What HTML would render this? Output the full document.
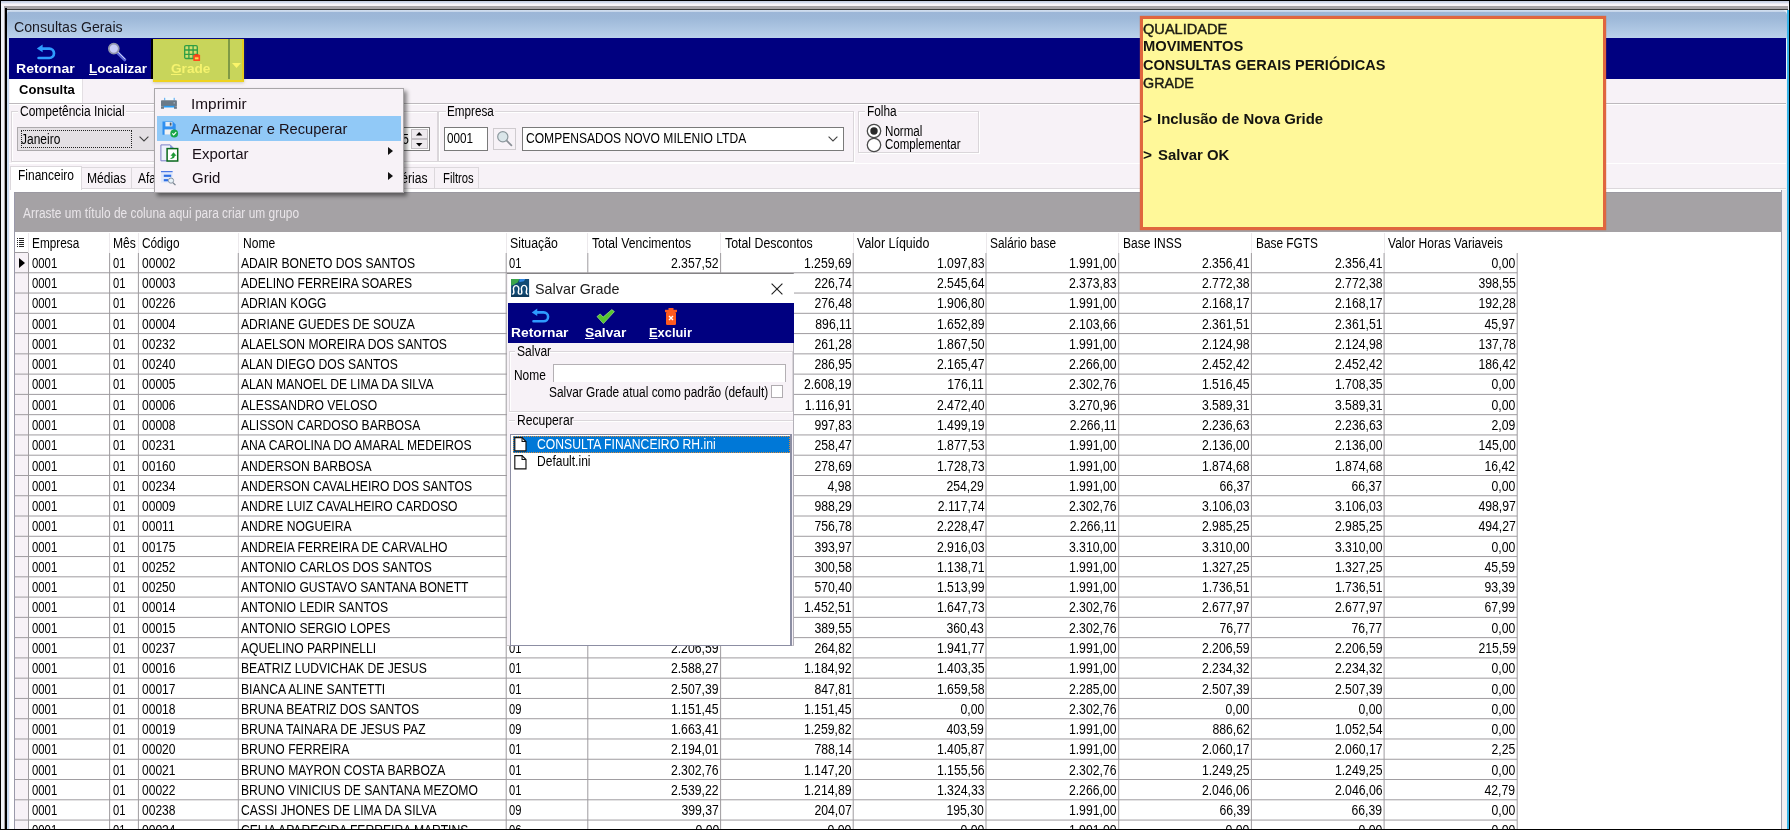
<!DOCTYPE html><html lang="pt-BR"><head><meta charset="utf-8"><title>Consultas Gerais</title><style>
    *{box-sizing:border-box}
    html,body{margin:0;padding:0}
    body{width:1790px;height:830px;overflow:hidden;background:#000;position:relative;font-family:"Liberation Sans",sans-serif;font-size:14px;color:#000}
    div,span,section{position:absolute;white-space:nowrap}
    section{left:0;top:0;width:1790px;height:830px}
    svg{position:absolute;overflow:visible}
    .t{line-height:16px;height:16px;transform-origin:0 50%;transform:scaleX(.85);white-space:pre}
    .r{transform-origin:100% 50%;text-align:right}
    .n{transform:scaleX(.873)}
.c{transform:scaleX(.86)}
.d{transform:scaleX(.8)}
.e{transform:scaleX(.81)}
.m{transform:scaleX(.866)}
    .w{color:#fff}
    .bd{font-weight:bold}
    u{text-decoration:underline}
    </style></head><body><div id="app" style="left:0;top:0;width:1790px;height:830px;will-change:transform">
<section id="window-frame">
<div style="left:1px;top:1px;width:1788px;height:828px;background:#eef1f8"></div>
<div style="left:1px;top:1px;width:1788px;height:5px;background:linear-gradient(#c2cbe0,#d6ddec 35%,#f6f3f8 60%,#f7f3f7)"></div>
<div style="left:4px;top:6px;width:1784px;height:3px;background:#a6a3a6"></div>
<div style="left:4px;top:9px;width:1784px;height:1px;background:#3c3c3c"></div>
<div style="left:3.5px;top:6px;width:1.5px;height:823px;background:#a6a3a6"></div>
<div style="left:5px;top:8px;width:2px;height:821px;background:#000"></div>
<div style="left:7px;top:10px;width:3px;height:819px;background:#c8dbf1"></div>
<div style="left:1786.5px;top:10px;width:1px;height:819px;background:#e6eef8"></div>
<div style="left:1787.3px;top:10px;width:1.7px;height:819px;background:#38b4e8"></div>
<div style="left:7px;top:10px;width:1780px;height:29px;background:linear-gradient(#d3e0f0 0,#c6d6ea 1.500px,#9cb6d7 2px,#9db8d8 8px,#b9d0ea 27px,#c4d9f1 100%);border-radius:5px 5px 0 0"></div>
<span class="t" style="top:18.64px;font-size:14.1px;left:14.10px;transform:scaleX(1.0055);color:#1a1a22;">Consultas Gerais</span>
<div style="left:9.3px;top:38.2px;width:1777.2px;height:40.7px;background:#000080"></div>
<div style="left:9.3px;top:78.9px;width:1777.2px;height:750.1px;background:#f7f2f7"></div>
</section>
<section id="main-toolbar">
<div style="left:153.2px;top:38.8px;width:90.6px;height:42.8px;background:#c8d55b;border:1px solid #d9cf35;border-left:0;border-right:2px solid #e3cc22;border-bottom:2px solid #efd21e;box-shadow:0 1px 3px rgba(120,120,60,.35)"></div>
<div style="left:151.2px;top:38.8px;width:2px;height:40.1px;background:#000"></div>
<div style="left:228.3px;top:39px;width:1.4px;height:40px;background:#7f9a45"></div>
<svg style="left:232px;top:63px" width="9" height="5" viewBox="0 0 9 5"><path d="M0 0h9L4.5 5z" fill="#fbf56a"/></svg>
<span class="t" style="top:61.20px;font-size:13px;left:16.00px;transform:scaleX(1.0833);color:#fff;font-weight:bold;">Retornar</span>
<span class="t" style="top:61.20px;font-size:13px;left:88.80px;transform:scaleX(1.0273);color:#fff;font-weight:bold;"><u>L</u>ocalizar</span>
<span class="t" style="top:61.20px;font-size:13px;left:171.00px;transform:scaleX(1.0485);color:#f5f36e;font-weight:bold;"><u>G</u>rade</span>
<svg style="left:35.500px;top:43.500px" width="20" height="17" viewBox="0 0 20 17"><path d="M5 4.600h8.300a4.700 4.700 0 0 1 0 9.400H2.600" fill="none" stroke="#2e9bff" stroke-width="2.700" stroke-linecap="round"/><path d="M6.600.400.800 4.600l5.800 3.700z" fill="#2e9bff"/></svg>
<svg style="left:106.300px;top:40.800px" width="22" height="22" viewBox="0 0 22 22"><path d="M10.500 10.500 18.700 18.700" stroke="#5a64d6" stroke-width="3.200" stroke-linecap="round"/><path d="M11.500 10.600 18.900 18" stroke="#d5d8f6" stroke-width="1" stroke-linecap="round"/><circle cx="7.800" cy="7.600" r="5" fill="#c8ccf8" stroke="#9095aa" stroke-width="1.700"/></svg>
<svg style="left:183.800px;top:45.200px" width="18" height="18" viewBox="0 0 18 18"><rect x=".7" y=".7" width="12.600" height="12.800" rx="1.200" fill="#d3de6c" stroke="#2f9e44" stroke-width="1.300"/><path d="M4.900.7v12.800M9.100.7v12.800M.7 5h12.600M.7 9.300h12.600" stroke="#2f9e44" stroke-width="1.300"/><rect x="9.300" y="9.800" width="6.800" height="6.200" rx=".6" fill="#ff4a1c"/><rect x="10.900" y="12.300" width="3.600" height="2" fill="#ffd84a"/><rect x="11" y="9" width="3.400" height="1.500" fill="#e0401a"/></svg>
</section>
<section id="page-tabs">
<div style="left:9.8px;top:78.9px;width:73.2px;height:23.8px;background:#fff;border-right:1px solid #e3dfe3"></div>
<span class="t" style="top:82.07px;font-size:13.4px;left:18.60px;transform:scaleX(0.9739);font-weight:bold;">Consulta</span>
<div style="left:9.3px;top:102.6px;width:1776.5px;height:1px;background:#bdb9bd"></div>
<div style="left:9.3px;top:103.6px;width:1776.5px;height:1px;background:#fff"></div>
</section>
<section id="filter-panel">
<div style="left:11px;top:110.5px;width:427px;height:51px;border:1px solid #dad6da;box-shadow:inset 1px 1px 0 #fff,1px 1px 0 #fff"></div>
<div style="left:18px;top:104.5px;width:107.7px;height:13px;background:#f7f2f7"></div>
<span class="t" style="top:102.77px;left:19.50px;transform:scaleX(0.857);">Competência Inicial</span>
<div style="left:438px;top:111px;width:415.5px;height:50.5px;border:1px solid #dad6da;box-shadow:inset 1px 1px 0 #fff,1px 1px 0 #fff"></div>
<div style="left:445.6px;top:105px;width:49.8px;height:13px;background:#f7f2f7"></div>
<span class="t" style="top:103.27px;left:447.10px;transform:scaleX(0.8352);">Empresa</span>
<div style="left:858px;top:111px;width:121px;height:41.5px;border:1px solid #dad6da;box-shadow:inset 1px 1px 0 #fff,1px 1px 0 #fff"></div>
<div style="left:865.4px;top:105px;width:32.7px;height:13px;background:#f7f2f7"></div>
<span class="t" style="top:103.27px;left:866.90px;transform:scaleX(0.8478);">Folha</span>
<div style="left:17.4px;top:127.3px;width:140px;height:23.5px;background:#e4e0e4;border:1px solid #adaaad"></div>
<div style="left:20.5px;top:130.3px;width:111.2px;height:17.7px;border:1px dotted #222"></div>
<span class="t" style="top:131.37px;left:21.20px;transform:scaleX(0.8558);">Janeiro</span>
<svg style="left:138.6px;top:136px" width="10" height="6" viewBox="0 0 10 6"><path d="M.6.6 5 5 9.4.6" fill="none" stroke="#444" stroke-width="1.1"/></svg>
<div style="left:330px;top:127.3px;width:99.8px;height:23.3px;background:#fff;border:1px solid #7a7a7a"></div>
<span class="t" style="top:130.57px;right:1381.00px;transform-origin:100% 50%;">5</span>
<div style="left:411px;top:128.6px;width:17.2px;height:10.3px;background:#eeeaee;border:1px solid #c4c0c4"></div>
<div style="left:411px;top:139.2px;width:17.2px;height:10.3px;background:#eeeaee;border:1px solid #c4c0c4"></div>
<svg style="left:416.4px;top:132px" width="6.4" height="3.6" viewBox="0 0 8 4.5"><path d="M0 4.5h8L4 0z" fill="#000"/></svg>
<svg style="left:416.4px;top:142.8px" width="6.4" height="3.6" viewBox="0 0 8 4.5"><path d="M0 0h8L4 4.5z" fill="#000"/></svg>
<div style="left:443.6px;top:127.3px;width:44.8px;height:23.3px;background:#fff;border:1px solid #7a7a7a"></div>
<span class="t" style="top:130.17px;left:447.20px;transform:scaleX(0.8377);">0001</span>
<div style="left:493px;top:127.5px;width:22.6px;height:22.6px;background:#f7f2f7;border:1px solid #cfcbcf"></div>
<svg style="left:496px;top:130px" width="17" height="17" viewBox="0 0 17 17"><path d="M10.2 10.2 15.4 15.4" stroke="#8a8f96" stroke-width="1.7" stroke-linecap="round"/><circle cx="6.8" cy="6.8" r="5.1" fill="#dbe6ea" stroke="#8b979c" stroke-width="1.2"/></svg>
<div style="left:522.2px;top:127.3px;width:321.4px;height:23.3px;background:#fff;border:1px solid #7a7a7a"></div>
<span class="t" style="top:130.17px;left:525.80px;transform:scaleX(0.8613);">COMPENSADOS NOVO MILENIO LTDA</span>
<svg style="left:828px;top:136.3px" width="10" height="6" viewBox="0 0 10 6"><path d="M.6.6 5 5 9.4.6" fill="none" stroke="#444" stroke-width="1.1"/></svg>
<svg style="left:865.7px;top:123.1px" width="16" height="16" viewBox="0 0 16 16"><circle cx="8" cy="8" r="6.700" fill="#fff" stroke="#4a4a4a" stroke-width="1.300"/><circle cx="8" cy="8" r="3.700" fill="#2a2a2a"/></svg>
<svg style="left:865.7px;top:137.2px" width="16" height="16" viewBox="0 0 16 16"><circle cx="8" cy="8" r="6.700" fill="#fff" stroke="#4a4a4a" stroke-width="1.300"/></svg>
<span class="t" style="top:122.57px;left:885.20px;transform:scaleX(0.8288);">Normal</span>
<span class="t" style="top:136.37px;left:885.20px;transform:scaleX(0.8222);">Complementar</span>
<div style="left:9.3px;top:163.2px;width:1776.5px;height:1px;background:#fff"></div>
</section>
<section id="view-tabs">
<div style="left:9.8px;top:188.5px;width:1776px;height:641px;background:#fff"></div>
<div style="left:1781px;top:190px;width:1px;height:639px;background:#a09fae"></div>
<div style="left:1782px;top:190px;width:4.6px;height:639px;background:#f1eef2"></div>
<div style="left:9.8px;top:188px;width:1776px;height:1px;background:#dcd8dc"></div>
<div style="left:82px;top:167px;width:49.7px;height:21.2px;background:#f7f2f7;border:1px solid #dcd8dc;border-bottom:0;border-left:0"></div>
<span class="t" style="top:169.67px;left:87.10px;transform:scaleX(0.864);">Médias</span>
<div style="left:131.7px;top:167px;width:90px;height:21.2px;background:#f7f2f7;border:1px solid #dcd8dc;border-bottom:0;border-left:0"></div>
<span class="t" style="top:169.67px;left:137.70px;">Afastamentos</span>
<div style="left:386px;top:167px;width:48.5px;height:21.2px;background:#f7f2f7;border:1px solid #dcd8dc;border-bottom:0;border-left:0"></div>
<span class="t" style="top:169.67px;left:393.80px;transform:scaleX(0.861);">Férias</span>
<div style="left:434.5px;top:167px;width:44.8px;height:21.2px;background:#f7f2f7;border:1px solid #dcd8dc;border-bottom:0;border-left:0"></div>
<span class="t" style="top:169.67px;left:442.90px;transform:scaleX(0.8052);">Filtros</span>
<div style="left:9.8px;top:165.7px;width:72.3px;height:24px;background:#fff;border:1px solid #dcd8dc;border-bottom:0"></div>
<span class="t" style="top:167.37px;left:18.40px;transform:scaleX(0.8566);">Financeiro</span>
</section>
<section id="group-band">
<div style="left:14.3px;top:191.7px;width:1767px;height:40.5px;background:#a5a2a5;border-left:1px solid #9a99aa;border-top:1px solid #9b99a1"></div>
<span class="t" style="top:204.77px;left:23.30px;transform:scaleX(0.8529);color:#e9e5e9;">Arraste um título de coluna aqui para criar um grupo</span>
</section>
<section id="grid-area">
<div style="left:14.3px;top:232px;width:14.2px;height:597px;border-left:1px solid #9a99aa"></div>
<div style="left:15.3px;top:252.5px;width:13.2px;height:576.5px;background:#f7f2f7"></div>
<div style="left:28px;top:232.5px;width:1px;height:20.5px;background:#ece9ec"></div>
<div style="left:109.1px;top:232.5px;width:1px;height:20.5px;background:#ece9ec"></div>
<div style="left:137.9px;top:232.5px;width:1px;height:20.5px;background:#ece9ec"></div>
<div style="left:237.8px;top:232.5px;width:1px;height:20.5px;background:#ece9ec"></div>
<div style="left:505.7px;top:232.5px;width:1px;height:20.5px;background:#ece9ec"></div>
<div style="left:587.3px;top:232.5px;width:1px;height:20.5px;background:#ece9ec"></div>
<div style="left:720.1px;top:232.5px;width:1px;height:20.5px;background:#ece9ec"></div>
<div style="left:852.7px;top:232.5px;width:1px;height:20.5px;background:#ece9ec"></div>
<div style="left:985.5px;top:232.5px;width:1px;height:20.5px;background:#ece9ec"></div>
<div style="left:1118.2px;top:232.5px;width:1px;height:20.5px;background:#ece9ec"></div>
<div style="left:1250.9px;top:232.5px;width:1px;height:20.5px;background:#ece9ec"></div>
<div style="left:1383.6px;top:232.5px;width:1px;height:20.5px;background:#ece9ec"></div>
<div style="left:28px;top:252.5px;width:1px;height:576.5px;background:rgba(158,155,159,1.00)"></div>
<div style="left:109px;top:252.5px;width:1px;height:576.5px;background:rgba(158,155,159,0.90)"></div>
<div style="left:110px;top:252.5px;width:1px;height:576.5px;background:rgba(158,155,159,0.10)"></div>
<div style="left:137px;top:252.5px;width:1px;height:576.5px;background:rgba(158,155,159,0.10)"></div>
<div style="left:138px;top:252.5px;width:1px;height:576.5px;background:rgba(158,155,159,0.90)"></div>
<div style="left:237px;top:252.5px;width:1px;height:576.5px;background:rgba(158,155,159,0.20)"></div>
<div style="left:238px;top:252.5px;width:1px;height:576.5px;background:rgba(158,155,159,0.80)"></div>
<div style="left:505px;top:252.5px;width:1px;height:576.5px;background:rgba(158,155,159,0.30)"></div>
<div style="left:506px;top:252.5px;width:1px;height:576.5px;background:rgba(158,155,159,0.70)"></div>
<div style="left:587px;top:252.5px;width:1px;height:576.5px;background:rgba(158,155,159,0.70)"></div>
<div style="left:588px;top:252.5px;width:1px;height:576.5px;background:rgba(158,155,159,0.30)"></div>
<div style="left:720px;top:252.5px;width:1px;height:576.5px;background:rgba(158,155,159,0.90)"></div>
<div style="left:721px;top:252.5px;width:1px;height:576.5px;background:rgba(158,155,159,0.10)"></div>
<div style="left:852px;top:252.5px;width:1px;height:576.5px;background:rgba(158,155,159,0.30)"></div>
<div style="left:853px;top:252.5px;width:1px;height:576.5px;background:rgba(158,155,159,0.70)"></div>
<div style="left:985px;top:252.5px;width:1px;height:576.5px;background:rgba(158,155,159,0.50)"></div>
<div style="left:986px;top:252.5px;width:1px;height:576.5px;background:rgba(158,155,159,0.50)"></div>
<div style="left:1118px;top:252.5px;width:1px;height:576.5px;background:rgba(158,155,159,0.80)"></div>
<div style="left:1119px;top:252.5px;width:1px;height:576.5px;background:rgba(158,155,159,0.20)"></div>
<div style="left:1250px;top:252.5px;width:1px;height:576.5px;background:rgba(158,155,159,0.10)"></div>
<div style="left:1251px;top:252.5px;width:1px;height:576.5px;background:rgba(158,155,159,0.90)"></div>
<div style="left:1383px;top:252.5px;width:1px;height:576.5px;background:rgba(158,155,159,0.40)"></div>
<div style="left:1384px;top:252.5px;width:1px;height:576.5px;background:rgba(158,155,159,0.60)"></div>
<div style="left:1516px;top:252.5px;width:1px;height:576.5px;background:rgba(158,155,159,0.30)"></div>
<div style="left:1517px;top:252.5px;width:1px;height:576.5px;background:rgba(158,155,159,0.70)"></div>
<div style="left:14.3px;top:252px;width:14.2px;height:1px;background:rgba(158,155,159,1.00)"></div>
<div style="left:15px;top:272px;width:1502.2px;height:1px;background:rgba(158,155,159,0.73)"></div>
<div style="left:15px;top:273px;width:1502.2px;height:1px;background:rgba(158,155,159,0.27)"></div>
<div style="left:15px;top:292px;width:1502.2px;height:1px;background:rgba(158,155,159,0.46)"></div>
<div style="left:15px;top:293px;width:1502.2px;height:1px;background:rgba(158,155,159,0.54)"></div>
<div style="left:15px;top:312px;width:1502.2px;height:1px;background:rgba(158,155,159,0.19)"></div>
<div style="left:15px;top:313px;width:1502.2px;height:1px;background:rgba(158,155,159,0.81)"></div>
<div style="left:15px;top:333px;width:1502.2px;height:1px;background:rgba(158,155,159,0.92)"></div>
<div style="left:15px;top:334px;width:1502.2px;height:1px;background:rgba(158,155,159,0.08)"></div>
<div style="left:15px;top:353px;width:1502.2px;height:1px;background:rgba(158,155,159,0.65)"></div>
<div style="left:15px;top:354px;width:1502.2px;height:1px;background:rgba(158,155,159,0.35)"></div>
<div style="left:15px;top:373px;width:1502.2px;height:1px;background:rgba(158,155,159,0.38)"></div>
<div style="left:15px;top:374px;width:1502.2px;height:1px;background:rgba(158,155,159,0.62)"></div>
<div style="left:15px;top:393px;width:1502.2px;height:1px;background:rgba(158,155,159,0.11)"></div>
<div style="left:15px;top:394px;width:1502.2px;height:1px;background:rgba(158,155,159,0.89)"></div>
<div style="left:15px;top:414px;width:1502.2px;height:1px;background:rgba(158,155,159,0.84)"></div>
<div style="left:15px;top:415px;width:1502.2px;height:1px;background:rgba(158,155,159,0.16)"></div>
<div style="left:15px;top:434px;width:1502.2px;height:1px;background:rgba(158,155,159,0.57)"></div>
<div style="left:15px;top:435px;width:1502.2px;height:1px;background:rgba(158,155,159,0.43)"></div>
<div style="left:15px;top:454px;width:1502.2px;height:1px;background:rgba(158,155,159,0.30)"></div>
<div style="left:15px;top:455px;width:1502.2px;height:1px;background:rgba(158,155,159,0.70)"></div>
<div style="left:15px;top:475px;width:1502.2px;height:1px;background:rgba(158,155,159,0.97)"></div>
<div style="left:15px;top:495px;width:1502.2px;height:1px;background:rgba(158,155,159,0.76)"></div>
<div style="left:15px;top:496px;width:1502.2px;height:1px;background:rgba(158,155,159,0.24)"></div>
<div style="left:15px;top:515px;width:1502.2px;height:1px;background:rgba(158,155,159,0.49)"></div>
<div style="left:15px;top:516px;width:1502.2px;height:1px;background:rgba(158,155,159,0.51)"></div>
<div style="left:15px;top:535px;width:1502.2px;height:1px;background:rgba(158,155,159,0.22)"></div>
<div style="left:15px;top:536px;width:1502.2px;height:1px;background:rgba(158,155,159,0.78)"></div>
<div style="left:15px;top:556px;width:1502.2px;height:1px;background:rgba(158,155,159,0.95)"></div>
<div style="left:15px;top:557px;width:1502.2px;height:1px;background:rgba(158,155,159,0.05)"></div>
<div style="left:15px;top:576px;width:1502.2px;height:1px;background:rgba(158,155,159,0.68)"></div>
<div style="left:15px;top:577px;width:1502.2px;height:1px;background:rgba(158,155,159,0.32)"></div>
<div style="left:15px;top:596px;width:1502.2px;height:1px;background:rgba(158,155,159,0.41)"></div>
<div style="left:15px;top:597px;width:1502.2px;height:1px;background:rgba(158,155,159,0.59)"></div>
<div style="left:15px;top:616px;width:1502.2px;height:1px;background:rgba(158,155,159,0.14)"></div>
<div style="left:15px;top:617px;width:1502.2px;height:1px;background:rgba(158,155,159,0.86)"></div>
<div style="left:15px;top:637px;width:1502.2px;height:1px;background:rgba(158,155,159,0.87)"></div>
<div style="left:15px;top:638px;width:1502.2px;height:1px;background:rgba(158,155,159,0.13)"></div>
<div style="left:15px;top:657px;width:1502.2px;height:1px;background:rgba(158,155,159,0.60)"></div>
<div style="left:15px;top:658px;width:1502.2px;height:1px;background:rgba(158,155,159,0.40)"></div>
<div style="left:15px;top:677px;width:1502.2px;height:1px;background:rgba(158,155,159,0.33)"></div>
<div style="left:15px;top:678px;width:1502.2px;height:1px;background:rgba(158,155,159,0.67)"></div>
<div style="left:15px;top:697px;width:1502.2px;height:1px;background:rgba(158,155,159,0.06)"></div>
<div style="left:15px;top:698px;width:1502.2px;height:1px;background:rgba(158,155,159,0.94)"></div>
<div style="left:15px;top:718px;width:1502.2px;height:1px;background:rgba(158,155,159,0.79)"></div>
<div style="left:15px;top:719px;width:1502.2px;height:1px;background:rgba(158,155,159,0.21)"></div>
<div style="left:15px;top:738px;width:1502.2px;height:1px;background:rgba(158,155,159,0.52)"></div>
<div style="left:15px;top:739px;width:1502.2px;height:1px;background:rgba(158,155,159,0.48)"></div>
<div style="left:15px;top:758px;width:1502.2px;height:1px;background:rgba(158,155,159,0.25)"></div>
<div style="left:15px;top:759px;width:1502.2px;height:1px;background:rgba(158,155,159,0.75)"></div>
<div style="left:15px;top:779px;width:1502.2px;height:1px;background:rgba(158,155,159,0.98)"></div>
<div style="left:15px;top:799px;width:1502.2px;height:1px;background:rgba(158,155,159,0.71)"></div>
<div style="left:15px;top:800px;width:1502.2px;height:1px;background:rgba(158,155,159,0.29)"></div>
<div style="left:15px;top:819px;width:1502.2px;height:1px;background:rgba(158,155,159,0.44)"></div>
<div style="left:15px;top:820px;width:1502.2px;height:1px;background:rgba(158,155,159,0.56)"></div>
<span class="t" style="top:234.97px;left:31.60px;transform:scaleX(0.8442);">Empresa</span>
<span class="t" style="top:234.97px;left:113.00px;transform:scaleX(0.8657);">Mês</span>
<span class="t" style="top:234.97px;left:142.20px;transform:scaleX(0.8451);">Código</span>
<span class="t" style="top:234.97px;left:242.50px;transform:scaleX(0.8619);">Nome</span>
<span class="t" style="top:234.97px;left:509.50px;transform:scaleX(0.8792);">Situação</span>
<span class="t" style="top:234.97px;left:592.40px;transform:scaleX(0.873);">Total Vencimentos</span>
<span class="t" style="top:234.97px;left:725.10px;transform:scaleX(0.8814);">Total Descontos</span>
<span class="t" style="top:234.97px;left:856.50px;transform:scaleX(0.8887);">Valor Líquido</span>
<span class="t" style="top:234.97px;left:989.90px;transform:scaleX(0.848);">Salário base</span>
<span class="t" style="top:234.97px;left:1122.60px;transform:scaleX(0.8586);">Base INSS</span>
<span class="t" style="top:234.97px;left:1255.60px;transform:scaleX(0.8463);">Base FGTS</span>
<span class="t" style="top:234.97px;left:1387.90px;transform:scaleX(0.8604);">Valor Horas Variaveis</span>
<svg style="left:17.2px;top:238px" width="7" height="10" viewBox="0 0 7 10"><path d="M0 .5h1M2 .5h5M0 2.5h1M2 2.5h5M0 4.5h1M2 4.5h5M0 6.5h1M2 6.5h5M0 8.5h1M2 8.5h5" stroke="#222" stroke-width="1"/></svg>
<svg style="left:18.6px;top:257.6px" width="6" height="10" viewBox="0 0 6 10"><path d="M0 0 6 5 0 10z" fill="#000"/></svg>
<div style="left:0;top:252.5px;width:1790px;height:576.5px;overflow:hidden">
<span class="t e" style="top:2.37px;left:31.80px;">0001</span>
<span class="t d" style="top:2.37px;left:112.60px;">01</span>
<span class="t c" style="top:2.37px;left:142.20px;">00002</span>
<span class="t m" style="top:2.37px;left:240.60px;">ADAIR BONETO DOS SANTOS</span>
<span class="t d" style="top:2.37px;left:509.20px;">01</span>
<span class="t n r" style="top:2.37px;right:1071.20px;transform-origin:100% 50%;">2.357,52</span>
<span class="t n r" style="top:2.37px;right:938.60px;transform-origin:100% 50%;">1.259,69</span>
<span class="t n r" style="top:2.37px;right:805.80px;transform-origin:100% 50%;">1.097,83</span>
<span class="t n r" style="top:2.37px;right:673.10px;transform-origin:100% 50%;">1.991,00</span>
<span class="t n r" style="top:2.37px;right:540.40px;transform-origin:100% 50%;">2.356,41</span>
<span class="t n r" style="top:2.37px;right:407.70px;transform-origin:100% 50%;">2.356,41</span>
<span class="t n r" style="top:2.37px;right:274.60px;transform-origin:100% 50%;">0,00</span>
<span class="t e" style="top:22.64px;left:31.80px;">0001</span>
<span class="t d" style="top:22.64px;left:112.60px;">01</span>
<span class="t c" style="top:22.64px;left:142.20px;">00003</span>
<span class="t m" style="top:22.64px;left:240.60px;">ADELINO FERREIRA SOARES</span>
<span class="t d" style="top:22.64px;left:509.20px;">01</span>
<span class="t n r" style="top:22.64px;right:1071.20px;transform-origin:100% 50%;">3.172,38</span>
<span class="t n r" style="top:22.64px;right:938.60px;transform-origin:100% 50%;">226,74</span>
<span class="t n r" style="top:22.64px;right:805.80px;transform-origin:100% 50%;">2.545,64</span>
<span class="t n r" style="top:22.64px;right:673.10px;transform-origin:100% 50%;">2.373,83</span>
<span class="t n r" style="top:22.64px;right:540.40px;transform-origin:100% 50%;">2.772,38</span>
<span class="t n r" style="top:22.64px;right:407.70px;transform-origin:100% 50%;">2.772,38</span>
<span class="t n r" style="top:22.64px;right:274.60px;transform-origin:100% 50%;">398,55</span>
<span class="t e" style="top:42.91px;left:31.80px;">0001</span>
<span class="t d" style="top:42.91px;left:112.60px;">01</span>
<span class="t c" style="top:42.91px;left:142.20px;">00226</span>
<span class="t m" style="top:42.91px;left:240.60px;">ADRIAN KOGG</span>
<span class="t d" style="top:42.91px;left:509.20px;">01</span>
<span class="t n r" style="top:42.91px;right:1071.20px;transform-origin:100% 50%;">2.183,28</span>
<span class="t n r" style="top:42.91px;right:938.60px;transform-origin:100% 50%;">276,48</span>
<span class="t n r" style="top:42.91px;right:805.80px;transform-origin:100% 50%;">1.906,80</span>
<span class="t n r" style="top:42.91px;right:673.10px;transform-origin:100% 50%;">1.991,00</span>
<span class="t n r" style="top:42.91px;right:540.40px;transform-origin:100% 50%;">2.168,17</span>
<span class="t n r" style="top:42.91px;right:407.70px;transform-origin:100% 50%;">2.168,17</span>
<span class="t n r" style="top:42.91px;right:274.60px;transform-origin:100% 50%;">192,28</span>
<span class="t e" style="top:63.18px;left:31.80px;">0001</span>
<span class="t d" style="top:63.18px;left:112.60px;">01</span>
<span class="t c" style="top:63.18px;left:142.20px;">00004</span>
<span class="t m" style="top:63.18px;left:240.60px;">ADRIANE GUEDES DE SOUZA</span>
<span class="t d" style="top:63.18px;left:509.20px;">01</span>
<span class="t n r" style="top:63.18px;right:1071.20px;transform-origin:100% 50%;">2.549,00</span>
<span class="t n r" style="top:63.18px;right:938.60px;transform-origin:100% 50%;">896,11</span>
<span class="t n r" style="top:63.18px;right:805.80px;transform-origin:100% 50%;">1.652,89</span>
<span class="t n r" style="top:63.18px;right:673.10px;transform-origin:100% 50%;">2.103,66</span>
<span class="t n r" style="top:63.18px;right:540.40px;transform-origin:100% 50%;">2.361,51</span>
<span class="t n r" style="top:63.18px;right:407.70px;transform-origin:100% 50%;">2.361,51</span>
<span class="t n r" style="top:63.18px;right:274.60px;transform-origin:100% 50%;">45,97</span>
<span class="t e" style="top:83.45px;left:31.80px;">0001</span>
<span class="t d" style="top:83.45px;left:112.60px;">01</span>
<span class="t c" style="top:83.45px;left:142.20px;">00232</span>
<span class="t m" style="top:83.45px;left:240.60px;">ALAELSON MOREIRA DOS SANTOS</span>
<span class="t d" style="top:83.45px;left:509.20px;">01</span>
<span class="t n r" style="top:83.45px;right:1071.20px;transform-origin:100% 50%;">2.128,78</span>
<span class="t n r" style="top:83.45px;right:938.60px;transform-origin:100% 50%;">261,28</span>
<span class="t n r" style="top:83.45px;right:805.80px;transform-origin:100% 50%;">1.867,50</span>
<span class="t n r" style="top:83.45px;right:673.10px;transform-origin:100% 50%;">1.991,00</span>
<span class="t n r" style="top:83.45px;right:540.40px;transform-origin:100% 50%;">2.124,98</span>
<span class="t n r" style="top:83.45px;right:407.70px;transform-origin:100% 50%;">2.124,98</span>
<span class="t n r" style="top:83.45px;right:274.60px;transform-origin:100% 50%;">137,78</span>
<span class="t e" style="top:103.72px;left:31.80px;">0001</span>
<span class="t d" style="top:103.72px;left:112.60px;">01</span>
<span class="t c" style="top:103.72px;left:142.20px;">00240</span>
<span class="t m" style="top:103.72px;left:240.60px;">ALAN DIEGO DOS SANTOS</span>
<span class="t d" style="top:103.72px;left:509.20px;">01</span>
<span class="t n r" style="top:103.72px;right:1071.20px;transform-origin:100% 50%;">2.452,42</span>
<span class="t n r" style="top:103.72px;right:938.60px;transform-origin:100% 50%;">286,95</span>
<span class="t n r" style="top:103.72px;right:805.80px;transform-origin:100% 50%;">2.165,47</span>
<span class="t n r" style="top:103.72px;right:673.10px;transform-origin:100% 50%;">2.266,00</span>
<span class="t n r" style="top:103.72px;right:540.40px;transform-origin:100% 50%;">2.452,42</span>
<span class="t n r" style="top:103.72px;right:407.70px;transform-origin:100% 50%;">2.452,42</span>
<span class="t n r" style="top:103.72px;right:274.60px;transform-origin:100% 50%;">186,42</span>
<span class="t e" style="top:123.99px;left:31.80px;">0001</span>
<span class="t d" style="top:123.99px;left:112.60px;">01</span>
<span class="t c" style="top:123.99px;left:142.20px;">00005</span>
<span class="t m" style="top:123.99px;left:240.60px;">ALAN MANOEL DE LIMA DA SILVA</span>
<span class="t d" style="top:123.99px;left:509.20px;">01</span>
<span class="t n r" style="top:123.99px;right:1071.20px;transform-origin:100% 50%;">2.784,30</span>
<span class="t n r" style="top:123.99px;right:938.60px;transform-origin:100% 50%;">2.608,19</span>
<span class="t n r" style="top:123.99px;right:805.80px;transform-origin:100% 50%;">176,11</span>
<span class="t n r" style="top:123.99px;right:673.10px;transform-origin:100% 50%;">2.302,76</span>
<span class="t n r" style="top:123.99px;right:540.40px;transform-origin:100% 50%;">1.516,45</span>
<span class="t n r" style="top:123.99px;right:407.70px;transform-origin:100% 50%;">1.708,35</span>
<span class="t n r" style="top:123.99px;right:274.60px;transform-origin:100% 50%;">0,00</span>
<span class="t e" style="top:144.26px;left:31.80px;">0001</span>
<span class="t d" style="top:144.26px;left:112.60px;">01</span>
<span class="t c" style="top:144.26px;left:142.20px;">00006</span>
<span class="t m" style="top:144.26px;left:240.60px;">ALESSANDRO VELOSO</span>
<span class="t d" style="top:144.26px;left:509.20px;">01</span>
<span class="t n r" style="top:144.26px;right:1071.20px;transform-origin:100% 50%;">3.589,31</span>
<span class="t n r" style="top:144.26px;right:938.60px;transform-origin:100% 50%;">1.116,91</span>
<span class="t n r" style="top:144.26px;right:805.80px;transform-origin:100% 50%;">2.472,40</span>
<span class="t n r" style="top:144.26px;right:673.10px;transform-origin:100% 50%;">3.270,96</span>
<span class="t n r" style="top:144.26px;right:540.40px;transform-origin:100% 50%;">3.589,31</span>
<span class="t n r" style="top:144.26px;right:407.70px;transform-origin:100% 50%;">3.589,31</span>
<span class="t n r" style="top:144.26px;right:274.60px;transform-origin:100% 50%;">0,00</span>
<span class="t e" style="top:164.53px;left:31.80px;">0001</span>
<span class="t d" style="top:164.53px;left:112.60px;">01</span>
<span class="t c" style="top:164.53px;left:142.20px;">00008</span>
<span class="t m" style="top:164.53px;left:240.60px;">ALISSON CARDOSO BARBOSA</span>
<span class="t d" style="top:164.53px;left:509.20px;">01</span>
<span class="t n r" style="top:164.53px;right:1071.20px;transform-origin:100% 50%;">2.497,02</span>
<span class="t n r" style="top:164.53px;right:938.60px;transform-origin:100% 50%;">997,83</span>
<span class="t n r" style="top:164.53px;right:805.80px;transform-origin:100% 50%;">1.499,19</span>
<span class="t n r" style="top:164.53px;right:673.10px;transform-origin:100% 50%;">2.266,11</span>
<span class="t n r" style="top:164.53px;right:540.40px;transform-origin:100% 50%;">2.236,63</span>
<span class="t n r" style="top:164.53px;right:407.70px;transform-origin:100% 50%;">2.236,63</span>
<span class="t n r" style="top:164.53px;right:274.60px;transform-origin:100% 50%;">2,09</span>
<span class="t e" style="top:184.80px;left:31.80px;">0001</span>
<span class="t d" style="top:184.80px;left:112.60px;">01</span>
<span class="t c" style="top:184.80px;left:142.20px;">00231</span>
<span class="t m" style="top:184.80px;left:240.60px;">ANA CAROLINA DO AMARAL MEDEIROS</span>
<span class="t d" style="top:184.80px;left:509.20px;">01</span>
<span class="t n r" style="top:184.80px;right:1071.20px;transform-origin:100% 50%;">2.136,00</span>
<span class="t n r" style="top:184.80px;right:938.60px;transform-origin:100% 50%;">258,47</span>
<span class="t n r" style="top:184.80px;right:805.80px;transform-origin:100% 50%;">1.877,53</span>
<span class="t n r" style="top:184.80px;right:673.10px;transform-origin:100% 50%;">1.991,00</span>
<span class="t n r" style="top:184.80px;right:540.40px;transform-origin:100% 50%;">2.136,00</span>
<span class="t n r" style="top:184.80px;right:407.70px;transform-origin:100% 50%;">2.136,00</span>
<span class="t n r" style="top:184.80px;right:274.60px;transform-origin:100% 50%;">145,00</span>
<span class="t e" style="top:205.07px;left:31.80px;">0001</span>
<span class="t d" style="top:205.07px;left:112.60px;">01</span>
<span class="t c" style="top:205.07px;left:142.20px;">00160</span>
<span class="t m" style="top:205.07px;left:240.60px;">ANDERSON BARBOSA</span>
<span class="t d" style="top:205.07px;left:509.20px;">01</span>
<span class="t n r" style="top:205.07px;right:1071.20px;transform-origin:100% 50%;">2.007,42</span>
<span class="t n r" style="top:205.07px;right:938.60px;transform-origin:100% 50%;">278,69</span>
<span class="t n r" style="top:205.07px;right:805.80px;transform-origin:100% 50%;">1.728,73</span>
<span class="t n r" style="top:205.07px;right:673.10px;transform-origin:100% 50%;">1.991,00</span>
<span class="t n r" style="top:205.07px;right:540.40px;transform-origin:100% 50%;">1.874,68</span>
<span class="t n r" style="top:205.07px;right:407.70px;transform-origin:100% 50%;">1.874,68</span>
<span class="t n r" style="top:205.07px;right:274.60px;transform-origin:100% 50%;">16,42</span>
<span class="t e" style="top:225.34px;left:31.80px;">0001</span>
<span class="t d" style="top:225.34px;left:112.60px;">01</span>
<span class="t c" style="top:225.34px;left:142.20px;">00234</span>
<span class="t m" style="top:225.34px;left:240.60px;">ANDERSON CAVALHEIRO DOS SANTOS</span>
<span class="t d" style="top:225.34px;left:509.20px;">01</span>
<span class="t n r" style="top:225.34px;right:1071.20px;transform-origin:100% 50%;">259,27</span>
<span class="t n r" style="top:225.34px;right:938.60px;transform-origin:100% 50%;">4,98</span>
<span class="t n r" style="top:225.34px;right:805.80px;transform-origin:100% 50%;">254,29</span>
<span class="t n r" style="top:225.34px;right:673.10px;transform-origin:100% 50%;">1.991,00</span>
<span class="t n r" style="top:225.34px;right:540.40px;transform-origin:100% 50%;">66,37</span>
<span class="t n r" style="top:225.34px;right:407.70px;transform-origin:100% 50%;">66,37</span>
<span class="t n r" style="top:225.34px;right:274.60px;transform-origin:100% 50%;">0,00</span>
<span class="t e" style="top:245.61px;left:31.80px;">0001</span>
<span class="t d" style="top:245.61px;left:112.60px;">01</span>
<span class="t c" style="top:245.61px;left:142.20px;">00009</span>
<span class="t m" style="top:245.61px;left:240.60px;">ANDRE LUIZ CAVALHEIRO CARDOSO</span>
<span class="t d" style="top:245.61px;left:509.20px;">01</span>
<span class="t n r" style="top:245.61px;right:1071.20px;transform-origin:100% 50%;">3.106,03</span>
<span class="t n r" style="top:245.61px;right:938.60px;transform-origin:100% 50%;">988,29</span>
<span class="t n r" style="top:245.61px;right:805.80px;transform-origin:100% 50%;">2.117,74</span>
<span class="t n r" style="top:245.61px;right:673.10px;transform-origin:100% 50%;">2.302,76</span>
<span class="t n r" style="top:245.61px;right:540.40px;transform-origin:100% 50%;">3.106,03</span>
<span class="t n r" style="top:245.61px;right:407.70px;transform-origin:100% 50%;">3.106,03</span>
<span class="t n r" style="top:245.61px;right:274.60px;transform-origin:100% 50%;">498,97</span>
<span class="t e" style="top:265.88px;left:31.80px;">0001</span>
<span class="t d" style="top:265.88px;left:112.60px;">01</span>
<span class="t c" style="top:265.88px;left:142.20px;">00011</span>
<span class="t m" style="top:265.88px;left:240.60px;">ANDRE NOGUEIRA</span>
<span class="t d" style="top:265.88px;left:509.20px;">01</span>
<span class="t n r" style="top:265.88px;right:1071.20px;transform-origin:100% 50%;">2.985,25</span>
<span class="t n r" style="top:265.88px;right:938.60px;transform-origin:100% 50%;">756,78</span>
<span class="t n r" style="top:265.88px;right:805.80px;transform-origin:100% 50%;">2.228,47</span>
<span class="t n r" style="top:265.88px;right:673.10px;transform-origin:100% 50%;">2.266,11</span>
<span class="t n r" style="top:265.88px;right:540.40px;transform-origin:100% 50%;">2.985,25</span>
<span class="t n r" style="top:265.88px;right:407.70px;transform-origin:100% 50%;">2.985,25</span>
<span class="t n r" style="top:265.88px;right:274.60px;transform-origin:100% 50%;">494,27</span>
<span class="t e" style="top:286.15px;left:31.80px;">0001</span>
<span class="t d" style="top:286.15px;left:112.60px;">01</span>
<span class="t c" style="top:286.15px;left:142.20px;">00175</span>
<span class="t m" style="top:286.15px;left:240.60px;">ANDREIA FERREIRA DE CARVALHO</span>
<span class="t d" style="top:286.15px;left:509.20px;">01</span>
<span class="t n r" style="top:286.15px;right:1071.20px;transform-origin:100% 50%;">3.310,00</span>
<span class="t n r" style="top:286.15px;right:938.60px;transform-origin:100% 50%;">393,97</span>
<span class="t n r" style="top:286.15px;right:805.80px;transform-origin:100% 50%;">2.916,03</span>
<span class="t n r" style="top:286.15px;right:673.10px;transform-origin:100% 50%;">3.310,00</span>
<span class="t n r" style="top:286.15px;right:540.40px;transform-origin:100% 50%;">3.310,00</span>
<span class="t n r" style="top:286.15px;right:407.70px;transform-origin:100% 50%;">3.310,00</span>
<span class="t n r" style="top:286.15px;right:274.60px;transform-origin:100% 50%;">0,00</span>
<span class="t e" style="top:306.42px;left:31.80px;">0001</span>
<span class="t d" style="top:306.42px;left:112.60px;">01</span>
<span class="t c" style="top:306.42px;left:142.20px;">00252</span>
<span class="t m" style="top:306.42px;left:240.60px;">ANTONIO CARLOS DOS SANTOS</span>
<span class="t d" style="top:306.42px;left:509.20px;">01</span>
<span class="t n r" style="top:306.42px;right:1071.20px;transform-origin:100% 50%;">1.439,29</span>
<span class="t n r" style="top:306.42px;right:938.60px;transform-origin:100% 50%;">300,58</span>
<span class="t n r" style="top:306.42px;right:805.80px;transform-origin:100% 50%;">1.138,71</span>
<span class="t n r" style="top:306.42px;right:673.10px;transform-origin:100% 50%;">1.991,00</span>
<span class="t n r" style="top:306.42px;right:540.40px;transform-origin:100% 50%;">1.327,25</span>
<span class="t n r" style="top:306.42px;right:407.70px;transform-origin:100% 50%;">1.327,25</span>
<span class="t n r" style="top:306.42px;right:274.60px;transform-origin:100% 50%;">45,59</span>
<span class="t e" style="top:326.69px;left:31.80px;">0001</span>
<span class="t d" style="top:326.69px;left:112.60px;">01</span>
<span class="t c" style="top:326.69px;left:142.20px;">00250</span>
<span class="t m" style="top:326.69px;left:240.60px;">ANTONIO GUSTAVO SANTANA BONETT</span>
<span class="t d" style="top:326.69px;left:509.20px;">01</span>
<span class="t n r" style="top:326.69px;right:1071.20px;transform-origin:100% 50%;">2.084,39</span>
<span class="t n r" style="top:326.69px;right:938.60px;transform-origin:100% 50%;">570,40</span>
<span class="t n r" style="top:326.69px;right:805.80px;transform-origin:100% 50%;">1.513,99</span>
<span class="t n r" style="top:326.69px;right:673.10px;transform-origin:100% 50%;">1.991,00</span>
<span class="t n r" style="top:326.69px;right:540.40px;transform-origin:100% 50%;">1.736,51</span>
<span class="t n r" style="top:326.69px;right:407.70px;transform-origin:100% 50%;">1.736,51</span>
<span class="t n r" style="top:326.69px;right:274.60px;transform-origin:100% 50%;">93,39</span>
<span class="t e" style="top:346.96px;left:31.80px;">0001</span>
<span class="t d" style="top:346.96px;left:112.60px;">01</span>
<span class="t c" style="top:346.96px;left:142.20px;">00014</span>
<span class="t m" style="top:346.96px;left:240.60px;">ANTONIO LEDIR SANTOS</span>
<span class="t d" style="top:346.96px;left:509.20px;">01</span>
<span class="t n r" style="top:346.96px;right:1071.20px;transform-origin:100% 50%;">3.100,24</span>
<span class="t n r" style="top:346.96px;right:938.60px;transform-origin:100% 50%;">1.452,51</span>
<span class="t n r" style="top:346.96px;right:805.80px;transform-origin:100% 50%;">1.647,73</span>
<span class="t n r" style="top:346.96px;right:673.10px;transform-origin:100% 50%;">2.302,76</span>
<span class="t n r" style="top:346.96px;right:540.40px;transform-origin:100% 50%;">2.677,97</span>
<span class="t n r" style="top:346.96px;right:407.70px;transform-origin:100% 50%;">2.677,97</span>
<span class="t n r" style="top:346.96px;right:274.60px;transform-origin:100% 50%;">67,99</span>
<span class="t e" style="top:367.23px;left:31.80px;">0001</span>
<span class="t d" style="top:367.23px;left:112.60px;">01</span>
<span class="t c" style="top:367.23px;left:142.20px;">00015</span>
<span class="t m" style="top:367.23px;left:240.60px;">ANTONIO SERGIO LOPES</span>
<span class="t d" style="top:367.23px;left:509.20px;">01</span>
<span class="t n r" style="top:367.23px;right:1071.20px;transform-origin:100% 50%;">749,98</span>
<span class="t n r" style="top:367.23px;right:938.60px;transform-origin:100% 50%;">389,55</span>
<span class="t n r" style="top:367.23px;right:805.80px;transform-origin:100% 50%;">360,43</span>
<span class="t n r" style="top:367.23px;right:673.10px;transform-origin:100% 50%;">2.302,76</span>
<span class="t n r" style="top:367.23px;right:540.40px;transform-origin:100% 50%;">76,77</span>
<span class="t n r" style="top:367.23px;right:407.70px;transform-origin:100% 50%;">76,77</span>
<span class="t n r" style="top:367.23px;right:274.60px;transform-origin:100% 50%;">0,00</span>
<span class="t e" style="top:387.50px;left:31.80px;">0001</span>
<span class="t d" style="top:387.50px;left:112.60px;">01</span>
<span class="t c" style="top:387.50px;left:142.20px;">00237</span>
<span class="t m" style="top:387.50px;left:240.60px;">AQUELINO PARPINELLI</span>
<span class="t d" style="top:387.50px;left:509.20px;">01</span>
<span class="t n r" style="top:387.50px;right:1071.20px;transform-origin:100% 50%;">2.206,59</span>
<span class="t n r" style="top:387.50px;right:938.60px;transform-origin:100% 50%;">264,82</span>
<span class="t n r" style="top:387.50px;right:805.80px;transform-origin:100% 50%;">1.941,77</span>
<span class="t n r" style="top:387.50px;right:673.10px;transform-origin:100% 50%;">1.991,00</span>
<span class="t n r" style="top:387.50px;right:540.40px;transform-origin:100% 50%;">2.206,59</span>
<span class="t n r" style="top:387.50px;right:407.70px;transform-origin:100% 50%;">2.206,59</span>
<span class="t n r" style="top:387.50px;right:274.60px;transform-origin:100% 50%;">215,59</span>
<span class="t e" style="top:407.77px;left:31.80px;">0001</span>
<span class="t d" style="top:407.77px;left:112.60px;">01</span>
<span class="t c" style="top:407.77px;left:142.20px;">00016</span>
<span class="t m" style="top:407.77px;left:240.60px;">BEATRIZ LUDVICHAK DE JESUS</span>
<span class="t d" style="top:407.77px;left:509.20px;">01</span>
<span class="t n r" style="top:407.77px;right:1071.20px;transform-origin:100% 50%;">2.588,27</span>
<span class="t n r" style="top:407.77px;right:938.60px;transform-origin:100% 50%;">1.184,92</span>
<span class="t n r" style="top:407.77px;right:805.80px;transform-origin:100% 50%;">1.403,35</span>
<span class="t n r" style="top:407.77px;right:673.10px;transform-origin:100% 50%;">1.991,00</span>
<span class="t n r" style="top:407.77px;right:540.40px;transform-origin:100% 50%;">2.234,32</span>
<span class="t n r" style="top:407.77px;right:407.70px;transform-origin:100% 50%;">2.234,32</span>
<span class="t n r" style="top:407.77px;right:274.60px;transform-origin:100% 50%;">0,00</span>
<span class="t e" style="top:428.04px;left:31.80px;">0001</span>
<span class="t d" style="top:428.04px;left:112.60px;">01</span>
<span class="t c" style="top:428.04px;left:142.20px;">00017</span>
<span class="t m" style="top:428.04px;left:240.60px;">BIANCA ALINE SANTETTI</span>
<span class="t d" style="top:428.04px;left:509.20px;">01</span>
<span class="t n r" style="top:428.04px;right:1071.20px;transform-origin:100% 50%;">2.507,39</span>
<span class="t n r" style="top:428.04px;right:938.60px;transform-origin:100% 50%;">847,81</span>
<span class="t n r" style="top:428.04px;right:805.80px;transform-origin:100% 50%;">1.659,58</span>
<span class="t n r" style="top:428.04px;right:673.10px;transform-origin:100% 50%;">2.285,00</span>
<span class="t n r" style="top:428.04px;right:540.40px;transform-origin:100% 50%;">2.507,39</span>
<span class="t n r" style="top:428.04px;right:407.70px;transform-origin:100% 50%;">2.507,39</span>
<span class="t n r" style="top:428.04px;right:274.60px;transform-origin:100% 50%;">0,00</span>
<span class="t e" style="top:448.31px;left:31.80px;">0001</span>
<span class="t d" style="top:448.31px;left:112.60px;">01</span>
<span class="t c" style="top:448.31px;left:142.20px;">00018</span>
<span class="t m" style="top:448.31px;left:240.60px;">BRUNA BEATRIZ DOS SANTOS</span>
<span class="t d" style="top:448.31px;left:509.20px;">09</span>
<span class="t n r" style="top:448.31px;right:1071.20px;transform-origin:100% 50%;">1.151,45</span>
<span class="t n r" style="top:448.31px;right:938.60px;transform-origin:100% 50%;">1.151,45</span>
<span class="t n r" style="top:448.31px;right:805.80px;transform-origin:100% 50%;">0,00</span>
<span class="t n r" style="top:448.31px;right:673.10px;transform-origin:100% 50%;">2.302,76</span>
<span class="t n r" style="top:448.31px;right:540.40px;transform-origin:100% 50%;">0,00</span>
<span class="t n r" style="top:448.31px;right:407.70px;transform-origin:100% 50%;">0,00</span>
<span class="t n r" style="top:448.31px;right:274.60px;transform-origin:100% 50%;">0,00</span>
<span class="t e" style="top:468.58px;left:31.80px;">0001</span>
<span class="t d" style="top:468.58px;left:112.60px;">01</span>
<span class="t c" style="top:468.58px;left:142.20px;">00019</span>
<span class="t m" style="top:468.58px;left:240.60px;">BRUNA TAINARA DE JESUS PAZ</span>
<span class="t d" style="top:468.58px;left:509.20px;">09</span>
<span class="t n r" style="top:468.58px;right:1071.20px;transform-origin:100% 50%;">1.663,41</span>
<span class="t n r" style="top:468.58px;right:938.60px;transform-origin:100% 50%;">1.259,82</span>
<span class="t n r" style="top:468.58px;right:805.80px;transform-origin:100% 50%;">403,59</span>
<span class="t n r" style="top:468.58px;right:673.10px;transform-origin:100% 50%;">1.991,00</span>
<span class="t n r" style="top:468.58px;right:540.40px;transform-origin:100% 50%;">886,62</span>
<span class="t n r" style="top:468.58px;right:407.70px;transform-origin:100% 50%;">1.052,54</span>
<span class="t n r" style="top:468.58px;right:274.60px;transform-origin:100% 50%;">0,00</span>
<span class="t e" style="top:488.85px;left:31.80px;">0001</span>
<span class="t d" style="top:488.85px;left:112.60px;">01</span>
<span class="t c" style="top:488.85px;left:142.20px;">00020</span>
<span class="t m" style="top:488.85px;left:240.60px;">BRUNO FERREIRA</span>
<span class="t d" style="top:488.85px;left:509.20px;">01</span>
<span class="t n r" style="top:488.85px;right:1071.20px;transform-origin:100% 50%;">2.194,01</span>
<span class="t n r" style="top:488.85px;right:938.60px;transform-origin:100% 50%;">788,14</span>
<span class="t n r" style="top:488.85px;right:805.80px;transform-origin:100% 50%;">1.405,87</span>
<span class="t n r" style="top:488.85px;right:673.10px;transform-origin:100% 50%;">1.991,00</span>
<span class="t n r" style="top:488.85px;right:540.40px;transform-origin:100% 50%;">2.060,17</span>
<span class="t n r" style="top:488.85px;right:407.70px;transform-origin:100% 50%;">2.060,17</span>
<span class="t n r" style="top:488.85px;right:274.60px;transform-origin:100% 50%;">2,25</span>
<span class="t e" style="top:509.12px;left:31.80px;">0001</span>
<span class="t d" style="top:509.12px;left:112.60px;">01</span>
<span class="t c" style="top:509.12px;left:142.20px;">00021</span>
<span class="t m" style="top:509.12px;left:240.60px;">BRUNO MAYRON COSTA BARBOZA</span>
<span class="t d" style="top:509.12px;left:509.20px;">01</span>
<span class="t n r" style="top:509.12px;right:1071.20px;transform-origin:100% 50%;">2.302,76</span>
<span class="t n r" style="top:509.12px;right:938.60px;transform-origin:100% 50%;">1.147,20</span>
<span class="t n r" style="top:509.12px;right:805.80px;transform-origin:100% 50%;">1.155,56</span>
<span class="t n r" style="top:509.12px;right:673.10px;transform-origin:100% 50%;">2.302,76</span>
<span class="t n r" style="top:509.12px;right:540.40px;transform-origin:100% 50%;">1.249,25</span>
<span class="t n r" style="top:509.12px;right:407.70px;transform-origin:100% 50%;">1.249,25</span>
<span class="t n r" style="top:509.12px;right:274.60px;transform-origin:100% 50%;">0,00</span>
<span class="t e" style="top:529.39px;left:31.80px;">0001</span>
<span class="t d" style="top:529.39px;left:112.60px;">01</span>
<span class="t c" style="top:529.39px;left:142.20px;">00022</span>
<span class="t m" style="top:529.39px;left:240.60px;">BRUNO VINICIUS DE SANTANA MEZOMO</span>
<span class="t d" style="top:529.39px;left:509.20px;">01</span>
<span class="t n r" style="top:529.39px;right:1071.20px;transform-origin:100% 50%;">2.539,22</span>
<span class="t n r" style="top:529.39px;right:938.60px;transform-origin:100% 50%;">1.214,89</span>
<span class="t n r" style="top:529.39px;right:805.80px;transform-origin:100% 50%;">1.324,33</span>
<span class="t n r" style="top:529.39px;right:673.10px;transform-origin:100% 50%;">2.266,00</span>
<span class="t n r" style="top:529.39px;right:540.40px;transform-origin:100% 50%;">2.046,06</span>
<span class="t n r" style="top:529.39px;right:407.70px;transform-origin:100% 50%;">2.046,06</span>
<span class="t n r" style="top:529.39px;right:274.60px;transform-origin:100% 50%;">42,79</span>
<span class="t e" style="top:549.66px;left:31.80px;">0001</span>
<span class="t d" style="top:549.66px;left:112.60px;">01</span>
<span class="t c" style="top:549.66px;left:142.20px;">00238</span>
<span class="t m" style="top:549.66px;left:240.60px;">CASSI JHONES DE LIMA DA SILVA</span>
<span class="t d" style="top:549.66px;left:509.20px;">09</span>
<span class="t n r" style="top:549.66px;right:1071.20px;transform-origin:100% 50%;">399,37</span>
<span class="t n r" style="top:549.66px;right:938.60px;transform-origin:100% 50%;">204,07</span>
<span class="t n r" style="top:549.66px;right:805.80px;transform-origin:100% 50%;">195,30</span>
<span class="t n r" style="top:549.66px;right:673.10px;transform-origin:100% 50%;">1.991,00</span>
<span class="t n r" style="top:549.66px;right:540.40px;transform-origin:100% 50%;">66,39</span>
<span class="t n r" style="top:549.66px;right:407.70px;transform-origin:100% 50%;">66,39</span>
<span class="t n r" style="top:549.66px;right:274.60px;transform-origin:100% 50%;">0,00</span>
<span class="t e" style="top:569.93px;left:31.80px;">0001</span>
<span class="t d" style="top:569.93px;left:112.60px;">01</span>
<span class="t c" style="top:569.93px;left:142.20px;">00024</span>
<span class="t m" style="top:569.93px;left:240.60px;">CELIA APARECIDA FERREIRA MARTINS</span>
<span class="t d" style="top:569.93px;left:509.20px;">06</span>
<span class="t n r" style="top:569.93px;right:1071.20px;transform-origin:100% 50%;">0,00</span>
<span class="t n r" style="top:569.93px;right:938.60px;transform-origin:100% 50%;">0,00</span>
<span class="t n r" style="top:569.93px;right:805.80px;transform-origin:100% 50%;">0,00</span>
<span class="t n r" style="top:569.93px;right:673.10px;transform-origin:100% 50%;">1.991,00</span>
<span class="t n r" style="top:569.93px;right:540.40px;transform-origin:100% 50%;">0,00</span>
<span class="t n r" style="top:569.93px;right:407.70px;transform-origin:100% 50%;">0,00</span>
<span class="t n r" style="top:569.93px;right:274.60px;transform-origin:100% 50%;">0,00</span>
</div>
</section>
<section id="grade-menu">
<div style="left:153.6px;top:88px;width:250.4px;height:104.5px;background:#f7f2f7;border:1px solid #a9a6a9;box-shadow:3px 3px 4px rgba(0,0,0,.45)"></div>
<div style="left:156.8px;top:116px;width:244px;height:24.6px;background:#91c9f7"></div>
<span class="t" style="top:96.37px;left:190.90px;transform:scaleX(1.098);color:#1a1018;">Imprimir</span>
<span class="t" style="top:121.07px;left:190.90px;transform:scaleX(1.0468);color:#1a1018;">Armazenar e Recuperar</span>
<span class="t" style="top:145.67px;left:191.50px;transform:scaleX(1.0676);color:#1a1018;">Exportar</span>
<span class="t" style="top:170.37px;left:191.50px;transform:scaleX(1.0698);color:#1a1018;">Grid</span>
<svg style="left:388px;top:146.8px" width="5" height="8" viewBox="0 0 5 8"><path d="M0 0 5 4 0 8z" fill="#111"/></svg>
<svg style="left:388px;top:171.5px" width="5" height="8" viewBox="0 0 5 8"><path d="M0 0 5 4 0 8z" fill="#111"/></svg>
<svg style="left:161px;top:97px" width="16" height="12" viewBox="0 0 16 12"><rect x="3.600" y=".3" width="9.700" height="3.200" fill="#f4f8fc"/><rect x="3.300" y=".8" width=".9" height="2.600" fill="#3b9bf0"/><rect x="12.700" y=".8" width=".9" height="2.600" fill="#3b9bf0"/><rect x="0" y="3.200" width="15.900" height="6.400" rx=".8" fill="#6b7986"/><rect x="12.600" y="5.400" width="1.200" height="1" fill="#bcd2e6"/><rect x="2.400" y="8.800" width="11.500" height="1.700" fill="#2a9df4"/><rect x="0" y="9.400" width="3" height="2.400" fill="#6b7986"/><rect x="13" y="9.400" width="2.900" height="2.400" fill="#6b7986"/></svg>
<svg style="left:162px;top:121px" width="18" height="17" viewBox="0 0 18 17"><path d="M.5.5h10.200l3 3v10.200H.5z" fill="#2f8ff0"/><rect x="3.400" y="1" width="7" height="4.400" fill="#e6eef8"/><rect x="7.800" y="1.600" width="1.700" height="3" fill="#4a5a6a"/><rect x="2.600" y="8.400" width="8.600" height="5.300" fill="#f2f2f2"/><circle cx="12.200" cy="12.500" r="3.900" fill="#1aa64b"/><path d="M10.300 12.400l1.400 1.500 2.500-2.700" fill="none" stroke="#fff" stroke-width="1.200"/></svg>
<svg style="left:159.600px;top:143.600px" width="19" height="19" viewBox="0 0 19 19"><path d="M.9.900h9.300l4.100 4.100v11.800H.9z" fill="#eef1fc" stroke="#7a7fc8" stroke-width="1"/><path d="M10.200.9v4.100h4.100z" fill="#7f95dc"/><rect x="7.100" y="4.600" width="10.600" height="12.400" fill="#fff" stroke="#0b6a1c" stroke-width="1.500"/><path d="M9.600 14.800c3.400.5 5.200-.9 5.200-3h1.700l-3-3.500-3 3.500h1.900c0 1.400-.9 2.500-2.800 3z" fill="#1c9a34"/></svg>
<svg style="left:161px;top:170.600px" width="17" height="15" viewBox="0 0 17 15"><rect x="0" y="0" width="11.600" height="11.600" fill="#dfe8fb"/><rect x="0" y="0" width="11.600" height="1.200" fill="#4a78e6"/><rect x="2.800" y="3.700" width="7.400" height="2.200" fill="#2f6fe4"/><rect x="2.800" y="8.100" width="4.400" height="2.200" fill="#2f6fe4"/><circle cx="10" cy="9.600" r="2.600" fill="#e8f2f8" stroke="#8a97a4" stroke-width="1"/><path d="M12 11.700l2.500 2.400" stroke="#7a8490" stroke-width="1.300"/></svg>
</section>
<section id="sticky-note">
<div style="left:1140px;top:16px;width:466px;height:214px;background:#fff899;border:3px solid #e0663e;box-shadow:0 0 1px #c65a30"></div>
<span class="t" style="top:20.68px;font-size:15.2px;left:1142.60px;transform:scaleX(0.9603);color:#1c1c14;-webkit-text-stroke:.45px #1c1c14;">QUALIDADE</span>
<span class="t" style="top:38.38px;font-size:15.2px;left:1142.60px;transform:scaleX(0.9689);color:#141410;font-weight:bold;">MOVIMENTOS</span>
<span class="t" style="top:56.78px;font-size:15.2px;left:1142.60px;transform:scaleX(0.9564);color:#141410;font-weight:bold;">CONSULTAS GERAIS PERIÓDICAS</span>
<span class="t" style="top:74.58px;font-size:15.2px;left:1142.60px;transform:scaleX(0.9423);color:#1c1c14;-webkit-text-stroke:.45px #1c1c14;">GRADE</span>
<span class="t" style="top:110.68px;font-size:15.2px;left:1142.60px;transform:scaleX(1.0141);color:#141410;font-weight:bold;">&gt;</span>
<span class="t" style="top:110.68px;font-size:15.2px;left:1156.60px;transform:scaleX(0.9845);color:#141410;font-weight:bold;">Inclusão de Nova Gride</span>
<span class="t" style="top:146.78px;font-size:15.2px;left:1142.60px;transform:scaleX(1.0141);color:#141410;font-weight:bold;">&gt;</span>
<span class="t" style="top:146.78px;font-size:15.2px;left:1157.60px;transform:scaleX(0.9833);color:#141410;font-weight:bold;">Salvar OK</span>
</section>
<section id="salvar-grade-dialog">
<div style="left:507.4px;top:273.4px;width:287.1px;height:372.6px;background:#f7f2f7;border:1px solid #c9c6c9;border-top:1px solid #858385;border-right:1px solid #b3b0b8;border-left:0"></div>
<div style="left:507.9px;top:274.4px;width:286.1px;height:28.8px;background:#fff"></div>
<svg style="left:510.900px;top:279.400px" width="18.200" height="18" viewBox="0 0 19 19"><rect width="19" height="19" fill="#124a73"/><path d="M0 0h9l-2 3.500-4 2.500-3 1z" fill="#3aa64a"/><path d="M9 0h6l-1.500 2.500-5 1z" fill="#2f86e0"/><path d="M1.200 16.500c2-1 2.200-2.300 1.500-4.500-.8-2.600.3-5 2.600-5s3.400 2.400 2.600 5c-.7 2.200-.5 3.500 1.500 4.500M9.600 16.500c2-1 2.200-2.300 1.500-4.500-.8-2.600.3-5.300 2.600-5.300s3.400 2.700 2.600 5.300c-.7 2.200-.5 3.500 1.500 4.500" fill="none" stroke="#fff" stroke-width="1.500"/><rect x="0" y="16.600" width="19" height="2.400" fill="#0d3a5c"/></svg>
<span class="t" style="top:280.84px;font-size:15px;left:534.60px;transform:scaleX(0.9562);color:#1b1b1b;">Salvar Grade</span>
<svg style="left:771px;top:282.6px" width="12" height="12" viewBox="0 0 12 12"><path d="M.6.6l10.800 10.800M11.400.6.600 11.400" stroke="#222" stroke-width="1.150" fill="none"/></svg>
<div style="left:507.7px;top:303px;width:286.5px;height:40.3px;background:#000080"></div>
<span class="t" style="top:325.40px;font-size:13px;left:511.30px;transform:scaleX(1.0611);color:#fff;font-weight:bold;">Retornar</span>
<span class="t" style="top:325.40px;font-size:13px;left:585.00px;transform:scaleX(1.0577);color:#fff;font-weight:bold;"><u>S</u>alvar</span>
<span class="t" style="top:325.40px;font-size:13px;left:648.70px;transform:scaleX(0.9894);color:#fff;font-weight:bold;"><u>E</u>xcluir</span>
<svg style="left:531.200px;top:308.400px" width="19" height="16.200" viewBox="0 0 20 17"><path d="M5 4.600h8.300a4.700 4.700 0 0 1 0 9.400H2.600" fill="none" stroke="#2e9bff" stroke-width="2.700" stroke-linecap="round"/><path d="M6.600.400.800 4.600l5.800 3.700z" fill="#2e9bff"/></svg>
<svg style="left:596.300px;top:308.800px" width="19" height="15" viewBox="0 0 19 15"><path d="M1 7.600 4.200 4.900l2.900 3.200L15.800.6l2.600 2L7.400 14.600z" fill="#56c62f" stroke="#a8e488" stroke-width=".7"/></svg>
<svg style="left:664.500px;top:308px" width="12" height="17" viewBox="0 0 12 17"><rect x="3.500" y="0" width="5" height="2.500" fill="#ff5a1f"/><rect x="0" y="1.800" width="12" height="2.400" fill="#ff5a1f"/><rect x="1" y="4" width="10" height="13" rx="1.200" fill="#ff5a1f"/><path d="M4 8l4 4M8 8l-4 4" stroke="#fff" stroke-width="1.400"/></svg>
<div style="left:509px;top:351px;width:284px;height:60.8px;border:1px solid #dad6da;box-shadow:inset 1px 1px 0 #fff,0 1px 0 #fff"></div>
<div style="left:515px;top:345px;width:35px;height:12px;background:#f7f2f7"></div>
<span class="t" style="top:342.67px;left:516.90px;transform:scaleX(0.8592);">Salvar</span>
<span class="t" style="top:366.57px;left:514.00px;transform:scaleX(0.8512);">Nome</span>
<div style="left:553px;top:364.2px;width:232.5px;height:18px;background:#fff;border:1px solid #b4b0b4;border-bottom:0"></div>
<span class="t" style="top:383.57px;left:548.50px;transform:scaleX(0.851);">Salvar Grade atual como padrão (default)</span>
<div style="left:771px;top:385.2px;width:12.4px;height:12.4px;background:#fff;border:1px solid #b0acb0"></div>
<div style="left:509px;top:420.4px;width:284px;height:14px;border-top:1px solid #dad6da;box-shadow:inset 0 1px 0 #fff"></div>
<div style="left:515px;top:414px;width:58px;height:13px;background:#f7f2f7"></div>
<span class="t" style="top:412.47px;left:516.90px;transform:scaleX(0.8673);">Recuperar</span>
<div style="left:510px;top:433.5px;width:281.5px;height:212px;background:#fff;border:1px solid #8c8ea3;border-right:2px solid #8c8ea3"></div>
<div style="left:512.5px;top:435.8px;width:277px;height:17.6px;background:#0078d7;outline:1px dotted #d98a3a;outline-offset:-1px"></div>
<svg style="left:514.2px;top:437px" width="12.800" height="14.500" viewBox="0 0 12 14"><path d="M.600.600h7l3.800 3.800v9H.600z" fill="#fff" stroke="#111" stroke-width="1.100"/><path d="M7.600.600v3.800h3.800" fill="none" stroke="#111" stroke-width="1"/></svg>
<svg style="left:514.2px;top:455.2px" width="12.800" height="14.500" viewBox="0 0 12 14"><path d="M.600.600h7l3.800 3.800v9H.600z" fill="#fff" stroke="#111" stroke-width="1.100"/><path d="M7.600.600v3.800h3.800" fill="none" stroke="#111" stroke-width="1"/></svg>
<span class="t" style="top:435.57px;left:537.30px;transform:scaleX(0.8686);color:#fff;">CONSULTA FINANCEIRO RH.ini</span>
<span class="t" style="top:453.37px;left:537.30px;transform:scaleX(0.8592);">Default.ini</span>
</section>
<div style="left:0px;top:829px;width:1790px;height:1px;background:#000"></div>
<div style="left:1789px;top:0px;width:1px;height:830px;background:#000"></div>
</div></body></html>
